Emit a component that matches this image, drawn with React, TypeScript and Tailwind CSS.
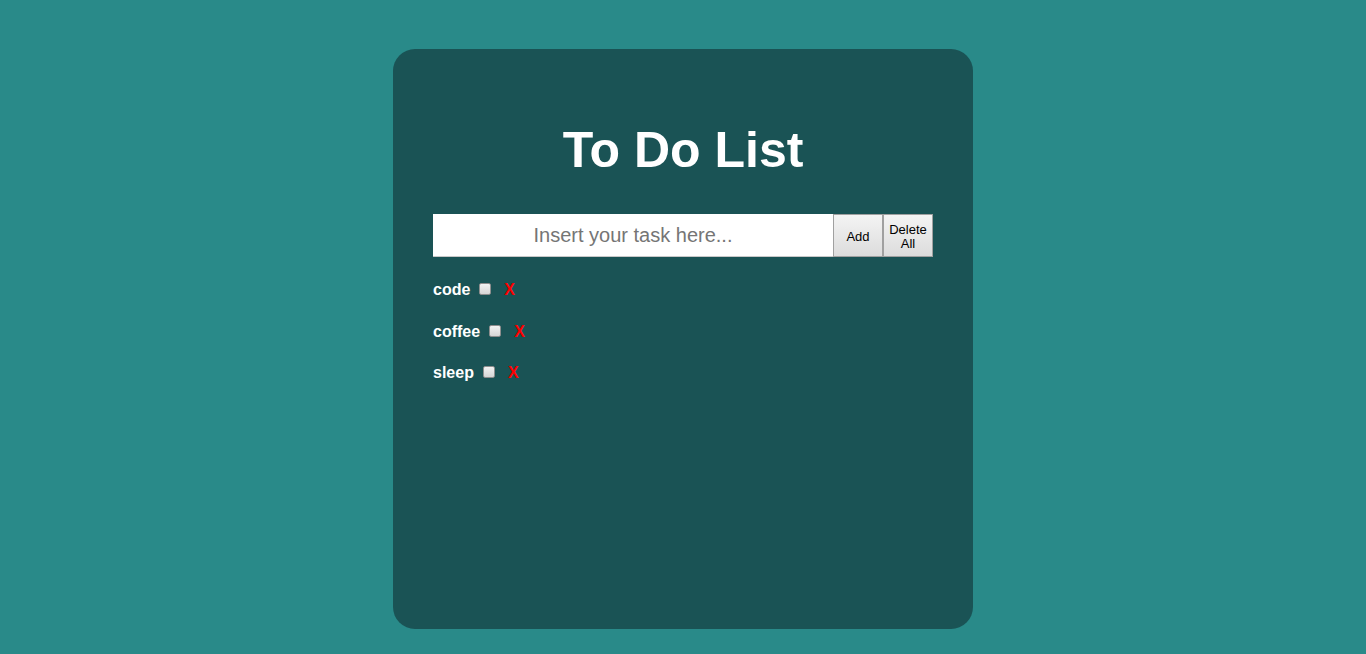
import { useState } from "react";

type Task = { id: number; text: string; done: boolean };

function App() {
  const [task, setTask] = useState("");
  const [tasks, setTasks] = useState<Task[]>([
    { id: 1, text: "code", done: false },
    { id: 2, text: "coffee", done: false },
    { id: 3, text: "sleep", done: false },
  ]);

  const addTask = () => {
    if (!task.trim()) return;
    setTasks((prev) => [...prev, { id: Date.now(), text: task, done: false }]);
    setTask("");
  };

  const toggle = (id: number) =>
    setTasks((prev) => prev.map((t) => (t.id === id ? { ...t, done: !t.done } : t)));

  const remove = (id: number) => setTasks((prev) => prev.filter((t) => t.id !== id));

  return (
    <div className="min-h-screen bg-[#298a89] pt-[49px] font-['Liberation_Sans',Arial,sans-serif]">
      <div className="mx-auto w-[580px] h-[580px] rounded-[22px] bg-[#1a5355] px-[40px] pt-[40px]">
        <h1 className="mt-[33px] text-center text-[50px] leading-[57px] font-bold text-white">
          To Do List
        </h1>
        <div className="mt-[35px] flex h-[43px]">
          <input
            type="text"
            value={task}
            placeholder="Insert your task here..."
            onChange={(e) => setTask(e.target.value)}
            className="w-[400px] h-full bg-white border-b border-[#c8c8c8] text-center text-[20px] text-black placeholder:text-[#757575] outline-none"
          />
          <button
            onClick={addTask}
            className="w-[50px] h-full border border-[#a0a0a0] bg-linear-to-b from-[#f4f4f4] to-[#dcdcdc] pt-[2px] text-[13px] leading-[14px] text-black"
          >
            Add
          </button>
          <button
            onClick={() => setTasks([])}
            className="w-[50px] h-full border border-[#a0a0a0] bg-linear-to-b from-[#f4f4f4] to-[#dcdcdc] pt-[2px] text-[13px] leading-[14px] text-black"
          >
            Delete All
          </button>
        </div>
        <ul className="mt-[24px] flex flex-col gap-[23.5px]">
          {tasks.map((t) => (
            <li key={t.id} className="flex items-center h-[18px]">
              <span
                className={
                  t.done
                    ? "text-[16px] leading-[18px] font-bold text-white line-through"
                    : "text-[16px] leading-[18px] font-bold text-white"
                }
              >
                {t.text}
              </span>
              <input
                type="checkbox"
                checked={t.done}
                onChange={() => toggle(t.id)}
                className="ml-[9px] -mt-[2px] w-[12px] h-[12px] appearance-none rounded-[2px] border border-[#8e8e8e] bg-linear-to-b from-[#f2f2f2] to-[#d6d6d6] checked:from-[#c8c8c8] checked:to-[#a8a8a8]"
              />
              <button
                onClick={() => remove(t.id)}
                className="ml-[13px] text-[16px] leading-[18px] font-bold text-[#ff0000]"
              >
                X
              </button>
            </li>
          ))}
        </ul>
      </div>
    </div>
  );
}

export default App;
